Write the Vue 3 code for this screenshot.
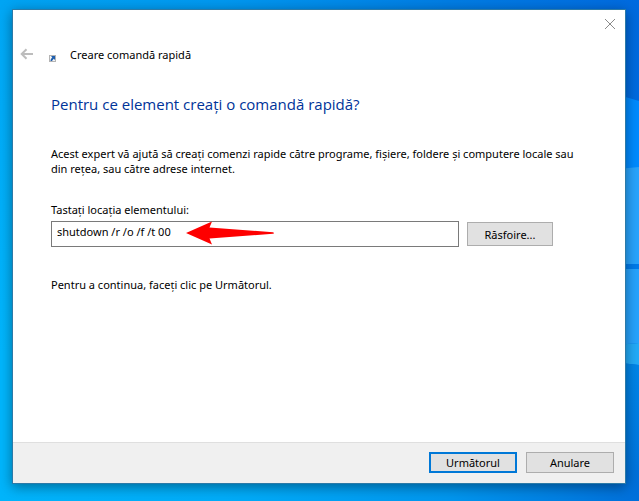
<script setup>
import { ref } from 'vue';

const location = ref('shutdown /r /o /f /t 00');
</script>

<template>
	<div class="desktop">
		<svg
			class="wallpaper"
			viewBox="0 0 639 501"
			preserveAspectRatio="none"
			aria-hidden="true"
		>
			<defs>
				<linearGradient id="sky" x1="0" y1="0" x2="1" y2="0">
					<stop offset="0" stop-color="#00a4f3" />
					<stop offset="0.35" stop-color="#0098f0" />
					<stop offset="0.7" stop-color="#007de4" />
					<stop offset="1" stop-color="#006adf" />
				</linearGradient>
				<linearGradient id="side" x1="0" y1="0" x2="0" y2="1">
					<stop offset="0" stop-color="#00a8f6" />
					<stop offset="0.7" stop-color="#00b6fd" />
					<stop offset="1" stop-color="#00b6fd" />
				</linearGradient>
				<linearGradient id="floor" x1="0" y1="0" x2="1" y2="0">
					<stop offset="0" stop-color="#00b4fb" />
					<stop offset="0.35" stop-color="#00acf8" />
					<stop offset="0.7" stop-color="#0096ee" />
					<stop offset="1" stop-color="#006fda" />
				</linearGradient>
				<linearGradient id="corner" x1="0" y1="0" x2="0" y2="1">
					<stop offset="0" stop-color="#0088ea" />
					<stop offset="1" stop-color="#0073dc" />
				</linearGradient>
			</defs>
			<rect width="639" height="501" fill="url(#sky)" />
			<rect y="10" width="300" height="491" fill="url(#side)" />
			<path d="M500 60 L639 101 V175 H500z" fill="#008bff" />
			<path d="M500 180 L639 167 V264 H500z" fill="#28a4fd" />
			<rect x="500" y="264" width="139" height="5" fill="#007bea" />
			<path d="M500 269 H639 V343 L500 355z" fill="#26a3fd" />
			<path d="M500 355 L639 343 V365 L500 350z" fill="#22abf8" />
			<path d="M500 350 L639 365 V480 H500z" fill="url(#corner)" />
			<rect y="470" width="639" height="31" fill="url(#floor)" />
		</svg>

		<main class="dialog">
			<div class="title-bar">
				<button type="button" class="close-btn" aria-label="Închidere">
					<svg width="12" height="12" viewBox="0 0 12 12">
						<path d="M1 1 L11 11 M11 1 L1 11" />
					</svg>
				</button>
			</div>

			<header class="header">
				<button type="button" class="back-btn" aria-label="Înapoi" disabled>
					<svg width="14" height="12" viewBox="0 0 14 12">
						<path d="M13 6 H2 M6.5 1.2 L1.7 6 L6.5 10.8" />
					</svg>
				</button>
				<svg class="shortcut-icon" width="7" height="7" viewBox="0 0 7 7">
					<rect x="0.5" y="0.5" width="6" height="6" />
					<path d="M2 1 H6 V5 L4.7 3.8 L3 6 H1.5 C1.5 4.5 2 3.5 3.3 2.4z" />
				</svg>
				<span>Creare comandă rapidă</span>
			</header>

			<form class="content" @submit.prevent>
				<h1>Pentru ce element creați o comandă rapidă?</h1>
				<p class="intro">
					Acest expert vă ajută să creați comenzi rapide către programe,
					fișiere, foldere și computere locale sau<br />
					din rețea, sau către adrese internet.
				</p>
				<label for="location">Tastați locația elementului:</label>
				<div class="location-row">
					<div class="field">
						<input id="location" v-model="location" type="text" />
						<svg
							class="arrow"
							width="90"
							height="26"
							viewBox="0 0 90 26"
							aria-hidden="true"
						>
							<path
								d="M1 12 L27 0.5 L24.5 6.5 L88 11.2 Q90 12 88 12.8 L24.5 17.5 L27 23.5z"
							/>
						</svg>
					</div>
					<button type="button" class="btn browse">Răsfoire...</button>
				</div>
				<p>Pentru a continua, faceți clic pe Următorul.</p>
			</form>

			<footer class="footer">
				<button type="button" class="btn primary">Următorul</button>
				<button type="button" class="btn">Anulare</button>
			</footer>
		</main>
	</div>
</template>

<style>
body {
	margin: 0;
}
</style>

<style scoped>
.desktop {
	position: relative;
	display: flex;
	box-sizing: border-box;
	min-height: 100vh;
	padding: 9px 13px 17px 12px;
	font-family: 'Noto Sans', 'Open Sans', sans-serif;
	font-size: 11px;
	line-height: 15px;
	color: #000;
	overflow: hidden;
}
.wallpaper {
	position: absolute;
	top: 0;
	left: 0;
	width: 100%;
	height: 100%;
}
.dialog {
	position: relative;
	display: flex;
	flex: 1;
	flex-direction: column;
	min-width: 0;
	border: 1px solid #2b7aa8;
	background: #fff;
	box-shadow: 0 3px 12px rgba(0, 0, 0, 0.4);
}
button,
input {
	box-sizing: border-box;
	font: inherit;
	color: inherit;
}
.title-bar {
	display: flex;
	justify-content: flex-end;
	padding: 8px 9px 0 0;
}
.close-btn,
.back-btn {
	display: flex;
	padding: 0;
	border: 0;
	background: transparent;
}
.close-btn path {
	fill: none;
	stroke: #8a8a8a;
	stroke-width: 1;
}
.header {
	display: flex;
	align-items: center;
	height: 20px;
	margin-top: 14px;
	padding-left: 7px;
}
.back-btn path {
	fill: none;
	stroke: #bdbdbd;
	stroke-width: 2;
}
.shortcut-icon {
	margin: 8px 14px 0 15px;
}
.shortcut-icon rect {
	fill: #f4f4f4;
	stroke: #b4b4b4;
}
.shortcut-icon path {
	fill: #1f5fae;
}
.content {
	flex: 1;
	padding: 28px 38px 0;
}
h1 {
	margin: 0 0 30px;
	font-family: 'Open Sans', 'Noto Sans', sans-serif;
	font-size: 15px;
	font-weight: 400;
	line-height: 24px;
	color: #003399;
}
p {
	margin: 0;
}
.intro {
	margin-bottom: 26px;
	white-space: nowrap;
}
label {
	display: block;
	margin-bottom: 4px;
}
.location-row {
	display: flex;
	align-items: center;
	gap: 8px;
	margin: 0 34px 30px 0;
}
.field {
	position: relative;
	display: flex;
	flex: 1;
}
.field input {
	flex: 1;
	min-width: 0;
	height: 26px;
	padding: 0 5px 5px;
	border: 1px solid #7a7a7a;
	border-radius: 0;
	background: #fff;
	outline: none;
}
.arrow {
	position: absolute;
	top: 0;
	left: 134px;
	pointer-events: none;
}
.arrow path {
	fill: #fe0000;
}
.btn {
	width: 88px;
	height: 21px;
	padding: 0;
	border: 1px solid #adadad;
	background: #e1e1e1;
	line-height: 15px;
}
.btn.browse {
	width: 86px;
	height: 24px;
}
.btn.primary {
	border: 2px solid #0078d7;
}
.footer {
	display: flex;
	justify-content: flex-end;
	gap: 9px;
	padding: 9px 11px 10px;
	border-top: 1px solid #dfdfdf;
	background: #f0f0f0;
}
</style>
